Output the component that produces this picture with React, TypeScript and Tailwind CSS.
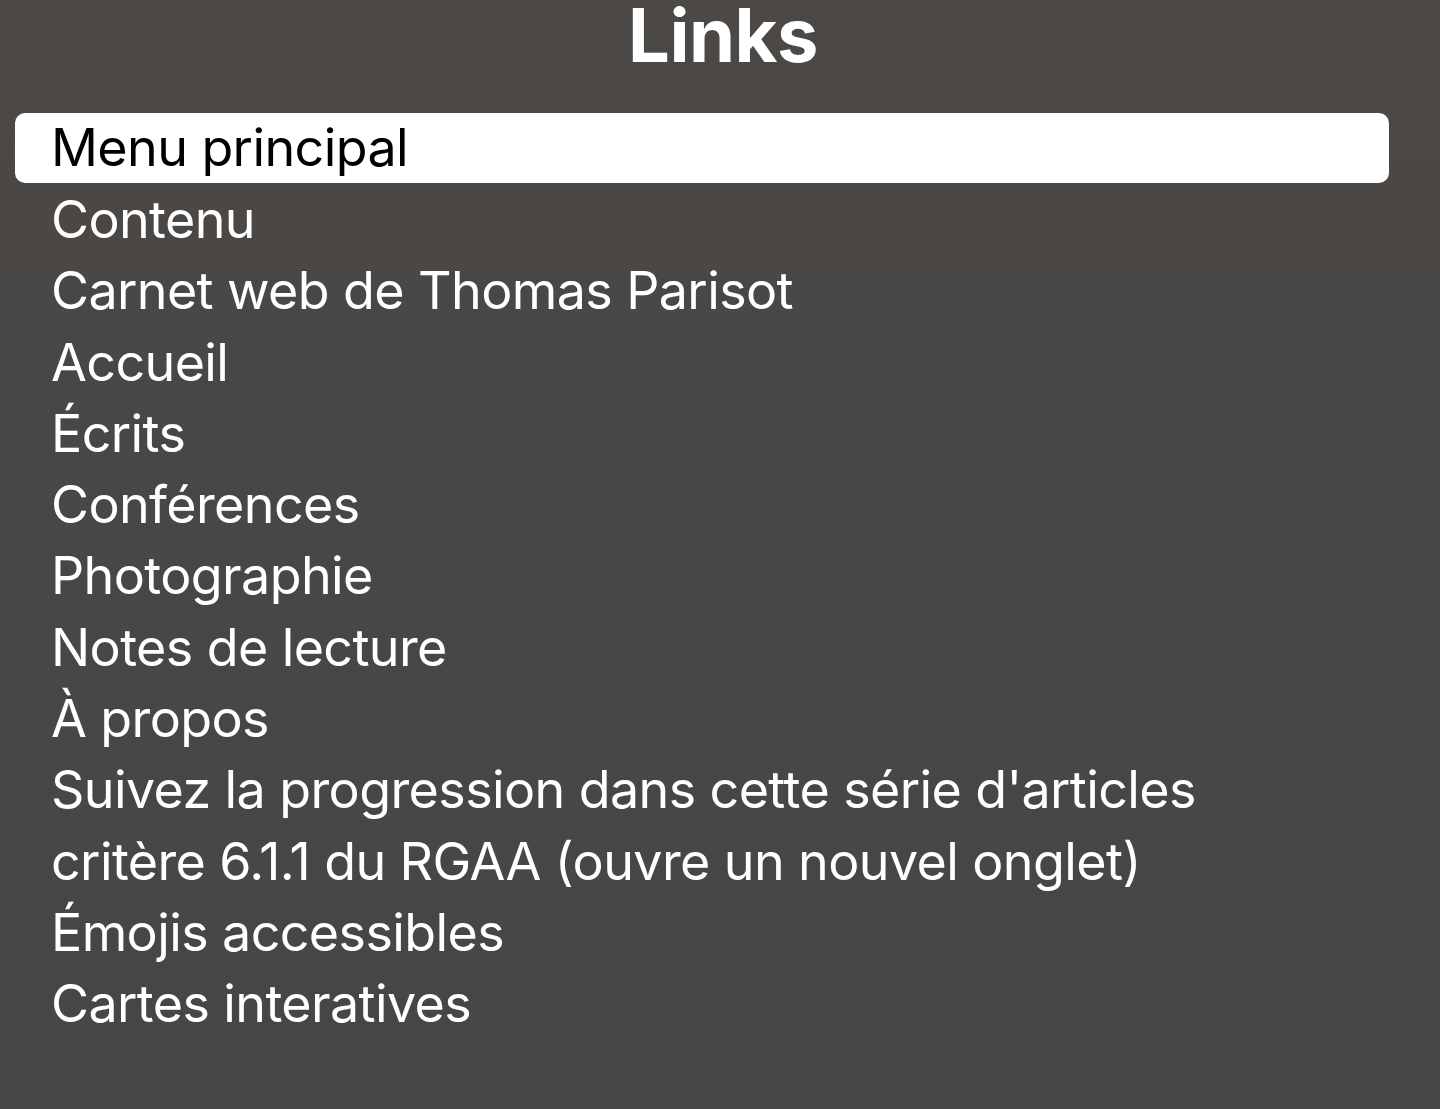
import React from "react";

const links: string[] = [
  "Menu principal",
  "Contenu",
  "Carnet web de Thomas Parisot",
  "Accueil",
  "Écrits",
  "Conférences",
  "Photographie",
  "Notes de lecture",
  "À propos",
  "Suivez la progression dans cette série d'articles",
  "critère 6.1.1 du RGAA (ouvre un nouvel onglet)",
  "Émojis accessibles",
  "Cartes interatives",
];

const App: React.FC = () => {
  const selected = 0;

  return (
    <div
      className="w-full h-[1109px] overflow-hidden bg-gradient-to-b from-[#4b4845] to-[#464646] text-white"
      style={{ fontFamily: "Inter, 'Noto Sans', sans-serif" }}
    >
      <h1 className="h-[70px] pt-[2px] text-center font-bold text-[74px] leading-[66px] tracking-[-0.5px] pl-[6px]">
        Links
      </h1>

      <ul className="mt-[43px] pl-[15px] pr-[51px]">
        {links.map((label, i) => (
          <li
            key={label}
            className={
              i === selected
                ? "h-[70px] mb-[1.3px] flex items-center pl-[36px] rounded-[10px] bg-white text-black"
                : "h-[71.3px] flex items-center pl-[36px]"
            }
          >
            <span className="text-[52px] leading-none tracking-[-0.6px]">{label}</span>
          </li>
        ))}
      </ul>
    </div>
  );
};

export default App;
